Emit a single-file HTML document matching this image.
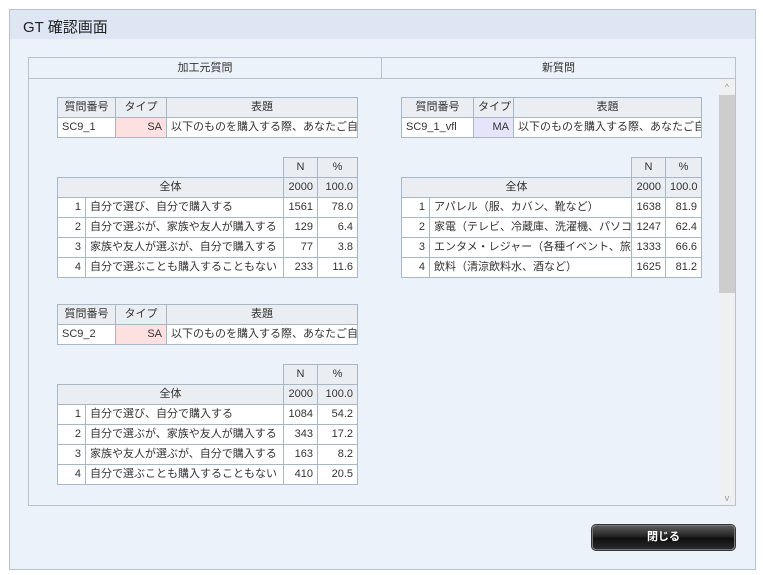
<!DOCTYPE html>
<html><head><meta charset="utf-8"><style>
*{margin:0;padding:0;box-sizing:border-box}
body{width:763px;height:575px;background:#fff;font-family:"Liberation Sans","Noto Sans CJK JP",sans-serif;font-size:11px;color:#333;position:relative;overflow:hidden}
.win{position:absolute;left:9px;top:9px;width:747px;height:561px;background:#ecf2fa;border:1px solid #b8c2cf}
.hdr{position:absolute;left:0;top:0;width:745px;height:29px;background:#dde6f2;font-size:15px;padding:6px 0 0 13px;color:#222}
.box{position:absolute;left:28px;top:57px;width:708px;height:449px;border:1px solid #b8c2cf;background:#ecf2fa}
.tab{position:absolute;top:57px;height:22px;background:#ecf2fa;border:1px solid #b8c2cf;text-align:center;line-height:20px;font-size:11px}
table{position:absolute;border-collapse:collapse;table-layout:fixed;font-size:11px}
td{border:1px solid #a9b6c6;height:20px;padding:0 4px;white-space:nowrap;overflow:hidden;line-height:19px}
.h td{background:#eaeef2;text-align:center}
.w{background:#fff}
.r{text-align:right}
.c{text-align:center}
.g{background:#eaeef2}
.sa{background:#fde0e0;text-align:right}
.ma{background:#e6e4fb;text-align:right}
.sb{position:absolute;left:719px;top:79px;width:16px;height:426px;background:#eff0f2}
.th{position:absolute;left:719px;top:95px;width:16px;height:198px;background:#cdcdcd}
.btn{position:absolute;left:592px;top:525px;width:143px;height:25px;border-radius:4px;background:linear-gradient(#5a5a5a,#1e1e1e 50%,#0e0e0e 51%,#2a2a2a);border:1px solid #777;box-shadow:0 0 0 1px #333;color:#fff;font-weight:bold;text-align:center;line-height:22px;font-size:11px}
</style></head><body>
<div class="win"><div class="hdr">GT 確認画面</div></div>
<div class="box"></div>
<div class="tab" style="left:28px;width:354px">加工元質問</div>
<div class="tab" style="left:381px;width:355px">新質問</div>
<div class="sb"><div style="text-align:center;color:#999;font-size:9px;margin-top:3px">^</div><div style="position:absolute;bottom:2px;width:16px;text-align:center;color:#999;font-size:9px">v</div></div>
<div class="th"></div>

<table style="left:57px;top:97px;width:300px"><colgroup><col width="58"><col width="51"><col width="191"></colgroup>
<tr class="h"><td>質問番号</td><td>タイプ</td><td>表題</td></tr>
<tr><td class="w">SC9_1</td><td class="sa">SA</td><td class="w">以下のものを購入する際、あなたご自身</td></tr></table>

<table style="left:57px;top:157px;width:300px"><colgroup><col width="28"><col width="198"><col width="34"><col width="40"></colgroup>
<tr><td colspan="2" style="border:none;border-bottom:1px solid #a9b6c6"></td><td class="g c">N</td><td class="g c">%</td></tr>
<tr><td colspan="2" class="g c">全体</td><td class="g r">2000</td><td class="g r">100.0</td></tr>
<tr class="w"><td class="r">1</td><td>自分で選び、自分で購入する</td><td class="r">1561</td><td class="r">78.0</td></tr>
<tr class="w"><td class="r">2</td><td>自分で選ぶが、家族や友人が購入する</td><td class="r">129</td><td class="r">6.4</td></tr>
<tr class="w"><td class="r">3</td><td>家族や友人が選ぶが、自分で購入する</td><td class="r">77</td><td class="r">3.8</td></tr>
<tr class="w"><td class="r">4</td><td>自分で選ぶことも購入することもない</td><td class="r">233</td><td class="r">11.6</td></tr></table>

<table style="left:57px;top:304px;width:300px"><colgroup><col width="58"><col width="51"><col width="191"></colgroup>
<tr class="h"><td>質問番号</td><td>タイプ</td><td>表題</td></tr>
<tr><td class="w">SC9_2</td><td class="sa">SA</td><td class="w">以下のものを購入する際、あなたご自身</td></tr></table>

<table style="left:57px;top:364px;width:300px"><colgroup><col width="28"><col width="198"><col width="34"><col width="40"></colgroup>
<tr><td colspan="2" style="border:none;border-bottom:1px solid #a9b6c6"></td><td class="g c">N</td><td class="g c">%</td></tr>
<tr><td colspan="2" class="g c">全体</td><td class="g r">2000</td><td class="g r">100.0</td></tr>
<tr class="w"><td class="r">1</td><td>自分で選び、自分で購入する</td><td class="r">1084</td><td class="r">54.2</td></tr>
<tr class="w"><td class="r">2</td><td>自分で選ぶが、家族や友人が購入する</td><td class="r">343</td><td class="r">17.2</td></tr>
<tr class="w"><td class="r">3</td><td>家族や友人が選ぶが、自分で購入する</td><td class="r">163</td><td class="r">8.2</td></tr>
<tr class="w"><td class="r">4</td><td>自分で選ぶことも購入することもない</td><td class="r">410</td><td class="r">20.5</td></tr></table>

<table style="left:401px;top:97px;width:300px"><colgroup><col width="72"><col width="40"><col width="188"></colgroup>
<tr class="h"><td>質問番号</td><td>タイプ</td><td>表題</td></tr>
<tr><td class="w">SC9_1_vfl</td><td class="ma">MA</td><td class="w">以下のものを購入する際、あなたご自身</td></tr></table>

<table style="left:401px;top:157px;width:300px"><colgroup><col width="28"><col width="202"><col width="34"><col width="36"></colgroup>
<tr><td colspan="2" style="border:none;border-bottom:1px solid #a9b6c6"></td><td class="g c">N</td><td class="g c">%</td></tr>
<tr><td colspan="2" class="g c">全体</td><td class="g r">2000</td><td class="g r">100.0</td></tr>
<tr class="w"><td class="r">1</td><td>アパレル（服、カバン、靴など）</td><td class="r">1638</td><td class="r">81.9</td></tr>
<tr class="w"><td class="r">2</td><td>家電（テレビ、冷蔵庫、洗濯機、パソコン</td><td class="r">1247</td><td class="r">62.4</td></tr>
<tr class="w"><td class="r">3</td><td>エンタメ・レジャー（各種イベント、旅行</td><td class="r">1333</td><td class="r">66.6</td></tr>
<tr class="w"><td class="r">4</td><td>飲料（清涼飲料水、酒など）</td><td class="r">1625</td><td class="r">81.2</td></tr></table>

<div class="btn">閉じる</div>
</body></html>
